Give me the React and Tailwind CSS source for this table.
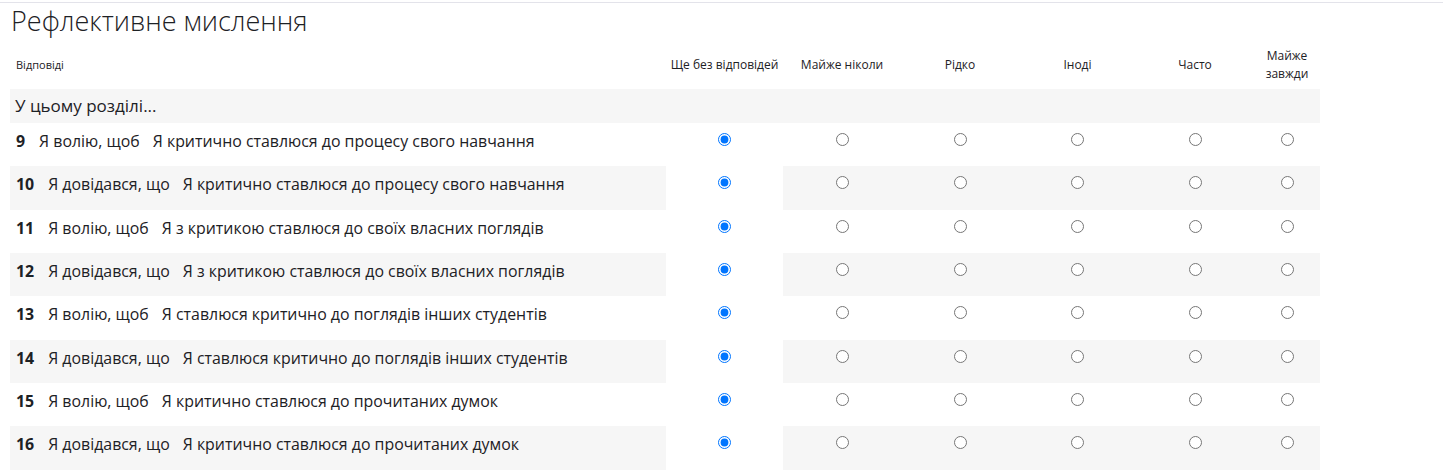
import React from 'react';

const columns = ['Ще без відповідей', 'Майже ніколи', 'Рідко', 'Іноді', 'Часто', 'Майже завжди'];

const questions = [
  { n: 9, prefix: 'Я волію, щоб', text: 'Я критично ставлюся до процесу свого навчання' },
  { n: 10, prefix: 'Я довідався, що', text: 'Я критично ставлюся до процесу свого навчання' },
  { n: 11, prefix: 'Я волію, щоб', text: 'Я з критикою ставлюся до своїх власних поглядів' },
  { n: 12, prefix: 'Я довідався, що', text: 'Я з критикою ставлюся до своїх власних поглядів' },
  { n: 13, prefix: 'Я волію, щоб', text: 'Я ставлюся критично до поглядів інших студентів' },
  { n: 14, prefix: 'Я довідався, що', text: 'Я ставлюся критично до поглядів інших студентів' },
  { n: 15, prefix: 'Я волію, щоб', text: 'Я критично ставлюся до прочитаних думок' },
  { n: 16, prefix: 'Я довідався, що', text: 'Я критично ставлюся до прочитаних думок' },
];

const widths = ['w-[656px]', 'w-[117px]', 'w-[118px]', 'w-[118px]', 'w-[117px]', 'w-[118px]', 'w-[66px]'];

const QuestionRow = ({ q, striped }) => (
  <tr className="h-[43.33px]">
    <td className={`align-top pl-[6px] pt-[8px] leading-[20px] text-[15.9px] ${striped ? 'bg-[#f6f6f6]' : ''}`}>
      <span className="font-bold">{q.n}</span>
      <span className="ml-[14px]">{q.prefix}</span>
      <span className="ml-[13px]">{q.text}</span>
    </td>
    {columns.map((c, i) => (
      <td key={c} className={`align-top text-center ${striped && i > 0 ? 'bg-[#f6f6f6]' : ''}`}>
        <div className="flex justify-center pt-[10px]">
          <input
            type="radio"
            name={`q${q.n}`}
            defaultChecked={i === 0}
            className="m-0 w-[13px] h-[13px]"
            aria-label={c}
          />
        </div>
      </td>
    ))}
  </tr>
);

export default function App() {
  return (
    <div className="min-h-[475px] bg-white text-[#1d2125] font-['Segoe_UI','Open_Sans','Noto_Sans',sans-serif]">
      <div className="border-t border-[#e3e3ea] mt-[2px]" />
      <h2 className="pl-[11px] text-[27px] leading-[36px] font-light">Рефлективне мислення</h2>
      <table className="ml-[10px] mt-[2px] border-collapse table-fixed w-[1310px]">
        <colgroup>
          {widths.map((w, i) => (
            <col key={i} className={w} />
          ))}
        </colgroup>
        <thead>
          <tr className="h-[48px]">
            <th className="text-left font-normal text-[11px] pl-[6px] align-middle">Відповіді</th>
            {columns.map((c) => (
              <th key={c} className="font-normal text-[12px] leading-[18px] text-center align-middle px-[4px]">
                {c}
              </th>
            ))}
          </tr>
        </thead>
        <tbody>
          <tr className="h-[34px] bg-[#f6f6f6]">
            <td colSpan={7} className="pl-[5px] text-[17px] align-middle">У цьому розділі...</td>
          </tr>
          {questions.map((q, i) => (
            <QuestionRow key={q.n} q={q} striped={i % 2 === 1} />
          ))}
        </tbody>
      </table>
    </div>
  );
}
